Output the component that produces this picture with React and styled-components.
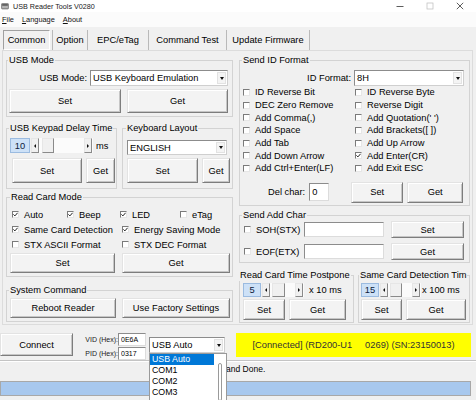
import React from 'react'
import styled, { createGlobalStyle, css } from 'styled-components'

const GlobalStyle = createGlobalStyle`
  html, body {
    margin: 0;
    padding: 0;
    background: #f0f0f0;
  }
  body {
    font-family: "Liberation Sans", Arial, sans-serif;
    font-size: 9.3px;
    color: #000;
  }
  * { box-sizing: border-box; }
`

const Window = styled.div`
  width: 476px;
  height: 400px;
  overflow: hidden;
  background: #f0f0f0;
`

const TitleBar = styled.div`
  height: 12px;
  background: #fff;
  display: flex;
  align-items: center;
  padding-left: 1px;
`

const TitleText = styled.span`
  font-size: 7.2px;
  margin-left: 4px;
  color: #1a1a1a;
`

const WinControls = styled.div`
  margin-left: auto;
  margin-right: 1px;
  display: flex;
  height: 100%;
`

const WinBtn = styled.span`
  width: 30px;
  display: flex;
  align-items: center;
  justify-content: center;
`

const MenuBar = styled.div`
  height: 15px;
  background: #fbfbfb;
  display: flex;
  align-items: center;
  gap: 8px;
  padding-left: 2px;
  font-size: 7.4px;
`

const MenuItem = styled.span`
  color: #111;
  u { text-decoration-thickness: 0.5px; text-underline-offset: 1px; }
`

const TabStrip = styled.div`
  height: 23px;
  padding: 3px 0 0 3px;
  display: flex;
`

const Tab = styled.div`
  width: ${p => p.$w}px;
  height: 20px;
  display: flex;
  align-items: center;
  justify-content: center;
  white-space: nowrap;
  ${p => p.$active
    ? css`
        border: 1px solid;
        border-color: #a0a0a0 #fff #fff #a0a0a0;
        margin-right: 2px;
      `
    : css`
        border-left: 1px solid #b9b9b9;
      `}
  ${p => p.$last && css`border-right: 1px solid #b9b9b9;`}
`

const TabPanel = styled.div`
  margin-left: 2px;
  width: 471px;
  height: 275px;
  border: 1px solid #dcdcdc;
  padding: 4px 0 0 3px;
  display: grid;
  grid-template-columns: 227px 231px;
  column-gap: 6px;
  align-items: start;
`

const Column = styled.div`
  display: flex;
  flex-direction: column;
`

const GroupRow = styled.div`
  display: flex;
  gap: ${p => p.$gap}px;
  margin-top: ${p => p.$mt || 0}px;
`

const Group = styled.fieldset`
  margin: ${p => p.$mt || 0}px 0 0 0;
  padding: 0;
  border: 1px solid #d3d3d3;
  height: ${p => p.$h}px;
  width: ${p => (p.$w ? `${p.$w}px` : 'auto')};
  min-width: 0;
  display: flex;
  flex-direction: column;
`

const Legend = styled.legend`
  padding: 0 1px;
  margin-left: ${p => p.$ml ?? 2}px;
  line-height: 11px;
  white-space: nowrap;
`

const Body = styled.div`
  padding: ${p => p.$pad};
  display: flex;
  flex-direction: column;
`

const Row = styled.div`
  display: flex;
  align-items: center;
  height: ${p => p.$h}px;
  gap: ${p => p.$gap || 0}px;
  margin-top: ${p => p.$mt || 0}px;
  padding-left: ${p => p.$pl || 0}px;
  justify-content: ${p => (p.$end ? 'flex-end' : 'flex-start')};
`

const FieldLabel = styled.span`
  margin-right: ${p => p.$mr ?? 3}px;
  margin-left: ${p => p.$ml || 0}px;
  white-space: nowrap;
`

const Btn = styled.button`
  width: ${p => p.$w}px;
  height: ${p => p.$h}px;
  margin: 0 0 0 ${p => p.$ml || 0}px;
  padding: 0;
  font: inherit;
  color: #000;
  background: #f3f3f3;
  border: 1px solid;
  border-color: #e3e3e3 #7d7d7d #7d7d7d #e3e3e3;
  box-shadow: inset 1px 1px 0 #fff, inset -1px -1px 0 #c6c6c6;
  flex-shrink: 0;
`

const SelectBox = styled.div`
  width: ${p => p.$w}px;
  height: ${p => p.$h}px;
  background: #fff;
  border: 1px solid;
  border-color: #8c8c8c #cfcfcf #cfcfcf #8c8c8c;
  display: flex;
  align-items: center;
  padding-left: 2px;
  white-space: nowrap;
  flex-shrink: 0;
`

const SelectArrow = styled.span`
  margin-left: auto;
  width: 9px;
  height: calc(100% - 2px);
  margin-right: 1px;
  background: #f4f4f4;
  border: 1px solid #e2e2e2;
  display: flex;
  align-items: center;
  justify-content: center;
  &::after {
    content: "";
    border-left: 2px solid transparent;
    border-right: 2px solid transparent;
    border-top: 3px solid #111;
  }
`

const TextField = styled.input`
  width: ${p => p.$w}px;
  height: ${p => p.$h}px;
  margin: 0 0 0 ${p => p.$ml || 0}px;
  padding: 0 0 0 2px;
  font: inherit;
  font-size: ${p => p.$fs || 9.3}px;
  background: #fff;
  border: 1px solid;
  border-color: #8c8c8c #dcdcdc #dcdcdc #8c8c8c;
  outline: none;
  flex-shrink: 0;
`

const Check = styled.div`
  display: flex;
  align-items: center;
  width: ${p => (p.$w ? `${p.$w}px` : 'auto')};
  white-space: nowrap;
  flex-shrink: 0;
`

const Box = styled.span`
  width: 7px;
  height: 7px;
  margin-right: 5px;
  background: #fff;
  border: 1px solid;
  border-color: #7a7a7a #e6e6e6 #e6e6e6 #7a7a7a;
  display: flex;
  align-items: center;
  justify-content: center;
  flex-shrink: 0;
`

const CheckGrid = styled.div`
  display: grid;
  grid-template-columns: 112px 1fr;
  grid-auto-rows: 12.7px;
  align-items: center;
`

const SpinValue = styled.span`
  width: ${p => p.$w}px;
  height: 100%;
  margin-right: ${p => p.$mr || 0}px;
  background: #cde1f7;
  border: 1px solid #9bbbe0;
  display: flex;
  align-items: center;
  justify-content: center;
  color: #0c1a3a;
  flex-shrink: 0;
`

const HScroll = styled.div`
  width: ${p => p.$w}px;
  height: 100%;
  background: #fbfbfb;
  display: flex;
  flex-shrink: 0;
`

const ScrollPart = styled.span`
  width: ${p => p.$w || 8}px;
  height: 100%;
  margin-left: ${p => p.$ml || 0}px;
  margin-right: ${p => p.$mr || 0}px;
  background: #f0f0f0;
  border: 1px solid;
  border-color: #e6e6e6 #8a8a8a #8a8a8a #e6e6e6;
  display: flex;
  align-items: center;
  justify-content: center;
  ${p => p.$dir === 'left' && css`
    &::after {
      content: "";
      border-top: 2px solid transparent;
      border-bottom: 2px solid transparent;
      border-right: 2px solid #111;
    }
  `}
  ${p => p.$dir === 'right' && css`
    &::after {
      content: "";
      border-top: 2px solid transparent;
      border-bottom: 2px solid transparent;
      border-left: 2px solid #111;
    }
  `}
`

const ScrollTrack = styled.span`
  flex: 1;
`

const Unit = styled.span`
  margin-left: ${p => p.$ml}px;
  white-space: nowrap;
`

const BottomBar = styled.div`
  height: 35px;
  padding-top: 8px;
  display: flex;
  align-items: flex-start;
`

const VidPid = styled.div`
  margin-left: 10px;
  display: flex;
  flex-direction: column;
  gap: 1px;
`

const SmallRow = styled.div`
  display: flex;
  align-items: center;
  height: 13px;
`

const SmallLabel = styled.span`
  width: 35px;
  text-align: right;
  font-size: 7px;
  color: #222;
`

const ComboWrap = styled.div`
  position: relative;
  margin: 4px 0 0 3px;
`

const DropList = styled.div`
  position: absolute;
  top: 16px;
  left: 0;
  width: 78px;
  height: 52px;
  background: #fff;
  border: 1px solid #9a9a9a;
  display: flex;
  z-index: 5;
  font-size: 8.8px;
`

const DropItems = styled.div`
  flex: 1;
  display: flex;
  flex-direction: column;
`

const DropItem = styled.div`
  height: 11px;
  line-height: 11px;
  padding-left: 2px;
  background: ${p => (p.$sel ? '#0078d7' : 'transparent')};
  color: ${p => (p.$sel ? '#fff' : '#000')};
`

const DropTrack = styled.div`
  width: 12px;
  padding-top: 9px;
  display: flex;
  justify-content: center;
`

const DropThumb = styled.span`
  width: 4px;
  height: 38px;
  border: 1px solid #9a9a9a;
  border-radius: 2px;
  background: #fff;
`

const Connected = styled.div`
  margin-left: 11px;
  width: 235px;
  height: 24px;
  background: #ffff00;
  display: flex;
  align-items: center;
  justify-content: center;
  white-space: pre;
  color: #333;
`

const Separator = styled.div`
  height: 2px;
  border-top: 1px solid #c4c4c4;
  border-bottom: 1px solid #fff;
`

const StatusText = styled.div`
  height: 15px;
  line-height: 15px;
  padding-left: 201px;
  font-size: 8.5px;
`

const Progress = styled.div`
  margin-top: 4px;
  width: 471px;
  height: 15px;
  border: 1px solid #a8a8a8;
  background: #a8c8ee;
`

function CheckMark() {
  return (
    <svg width="5" height="5" viewBox="0 0 5 5">
      <path d="M0.4 2.4 L1.9 3.9 L4.6 0.8" fill="none" stroke="#222" strokeWidth="1" />
    </svg>
  )
}

function CheckBox({ label, checked, w }) {
  return (
    <Check $w={w}>
      <Box>{checked && <CheckMark />}</Box>
      {label}
    </Check>
  )
}

function Select({ value, w, h }) {
  return (
    <SelectBox $w={w} $h={h}>
      {value}
      <SelectArrow />
    </SelectBox>
  )
}

function Spin({ value, valueW, scrollW, thumbGap, thumbW, unit, unitGap }) {
  return (
    <>
      <SpinValue $w={valueW} $mr={1}>{value}</SpinValue>
      <HScroll $w={scrollW}>
        <ScrollPart $dir="left" />
        <ScrollPart $w={thumbW} $ml={thumbGap} />
        <ScrollTrack />
        <ScrollPart $dir="right" $mr={1} />
      </HScroll>
      <Unit $ml={unitGap}>{unit}</Unit>
    </>
  )
}

function AppIcon() {
  return (
    <svg width="8" height="8" viewBox="0 0 8 8">
      <rect x="0.5" y="1.5" width="7" height="5.5" rx="0.8" fill="#9c9c9c" stroke="#666" strokeWidth="0.6" />
      <rect x="1.2" y="2.2" width="5.6" height="1.4" fill="#555" />
      <rect x="1.5" y="4.5" width="1.2" height="1" fill="#e8e8e8" />
      <rect x="3.4" y="4.5" width="1.2" height="1" fill="#e8e8e8" />
      <rect x="5.3" y="4.5" width="1.2" height="1" fill="#e8e8e8" />
    </svg>
  )
}

const idChecks = [
  ['ID Reverse Bit', false], ['ID Reverse Byte', false],
  ['DEC Zero Remove', false], ['Reverse Digit', false],
  ['Add Comma(,)', false], ["Add Quotation(' ')", false],
  ['Add Space', false], ['Add Brackets([ ])', false],
  ['Add Tab', false], ['Add Up Arrow', false],
  ['Add Down Arrow', false], ['Add Enter(CR)', true],
  ['Add Ctrl+Enter(LF)', false], ['Add Exit ESC', false],
]

export default function App() {
  return (
    <Window>
      <GlobalStyle />
      <TitleBar>
        <AppIcon />
        <TitleText>USB Reader Tools V0280</TitleText>
        <WinControls>
          <WinBtn>
            <svg width="8" height="8" viewBox="0 0 8 8"><path d="M0.5 4.5 H7.5" stroke="#333" strokeWidth="0.8" /></svg>
          </WinBtn>
          <WinBtn>
            <svg width="8" height="8" viewBox="0 0 8 8"><rect x="1" y="1" width="6" height="6" fill="none" stroke="#bbb" strokeWidth="0.7" /></svg>
          </WinBtn>
          <WinBtn>
            <svg width="8" height="8" viewBox="0 0 8 8"><path d="M0.8 0.8 L7.2 7.2 M7.2 0.8 L0.8 7.2" stroke="#333" strokeWidth="0.8" /></svg>
          </WinBtn>
        </WinControls>
      </TitleBar>

      <MenuBar>
        <MenuItem><u>F</u>ile</MenuItem>
        <MenuItem><u>L</u>anguage</MenuItem>
        <MenuItem><u>A</u>bout</MenuItem>
      </MenuBar>

      <TabStrip>
        <Tab $w={47} $active>Common</Tab>
        <Tab $w={35}>Option</Tab>
        <Tab $w={61}>EPC/eTag</Tab>
        <Tab $w={78}>Command Test</Tab>
        <Tab $w={84} $last>Update Firmware</Tab>
      </TabStrip>

      <TabPanel>
        <Column>
          <Group $h={62}>
            <Legend $ml={1}>USB Mode</Legend>
            <Body $pad="4px 4px 0 2px">
              <Row $h={16} $end>
                <FieldLabel>USB Mode:</FieldLabel>
                <Select value="USB Keyboard Emulation" w={138} h={16} />
              </Row>
              <Row $h={24} $gap={6} $mt={3}>
                <Btn $w={112} $h={24}>Set</Btn>
                <Btn $w={101} $h={24}>Get</Btn>
              </Row>
            </Body>
          </Group>

          <GroupRow $gap={5} $mt={6}>
            <Group $w={111} $h={66}>
              <Legend $ml={2}>USB Keypad Delay Time</Legend>
              <Body $pad="4px 0 0 3px">
                <Row $h={15}>
                  <Spin value="10" valueW={20} scrollW={62} thumbGap={3} thumbW={12} unit="ms" unitGap={3} />
                </Row>
                <Row $h={25} $gap={4} $mt={5} $pl={2}>
                  <Btn $w={70} $h={25}>Set</Btn>
                  <Btn $w={29} $h={25}>Get</Btn>
                </Row>
              </Body>
            </Group>
            <Group $w={111} $h={66}>
              <Legend $ml={3}>Keyboard Layout</Legend>
              <Body $pad="6px 0 0 4px">
                <Row $h={15}>
                  <Select value="ENGLISH" w={100} h={15} />
                </Row>
                <Row $h={25} $gap={4} $mt={3}>
                  <Btn $w={71} $h={25}>Set</Btn>
                  <Btn $w={28} $h={25}>Get</Btn>
                </Row>
              </Body>
            </Group>
          </GroupRow>

          <Group $h={85} $mt={3}>
            <Legend $ml={3}>Read Card Mode</Legend>
            <Body $pad="4px 0 0 3px">
              <Row $h={15} $pl={2}>
                <CheckBox label="Auto" checked w={55} />
                <CheckBox label="Beep" checked w={53} />
                <CheckBox label="LED" checked w={60} />
                <CheckBox label="eTag" />
              </Row>
              <Row $h={15} $pl={2}>
                <CheckBox label="Same Card Detection" checked w={110} />
                <CheckBox label="Energy Saving Mode" checked />
              </Row>
              <Row $h={15} $pl={2}>
                <CheckBox label="STX ASCII Format" w={110} />
                <CheckBox label="STX DEC Format" />
              </Row>
              <Row $h={20} $gap={7} $mt={1}>
                <Btn $w={105} $h={20}>Set</Btn>
                <Btn $w={108} $h={20}>Get</Btn>
              </Row>
            </Body>
          </Group>

          <Group $h={37} $mt={8}>
            <Legend $ml={2}>System Command</Legend>
            <Body $pad="2px 0 0 3px">
              <Row $h={20} $gap={6}>
                <Btn $w={106} $h={20}>Reboot Reader</Btn>
                <Btn $w={108} $h={20}>Use Factory Settings</Btn>
              </Row>
            </Body>
          </Group>
        </Column>

        <Column>
          <Group $h={151}>
            <Legend $ml={2}>Send ID Format</Legend>
            <Body $pad="4px 5px 0 3px">
              <Row $h={16} $end>
                <FieldLabel>ID Format:</FieldLabel>
                <Select value="8H" w={110} h={16} />
              </Row>
              <CheckGrid>
                {idChecks.map(([label, checked]) => (
                  <CheckBox key={label} label={label} checked={checked} />
                ))}
              </CheckGrid>
              <Row $h={21} $mt={7}>
                <FieldLabel $ml={25} $mr={4}>Del char:</FieldLabel>
                <TextField $w={20} $h={18} defaultValue="0" readOnly />
                <Btn $w={52} $h={21} $ml={22}>Set</Btn>
                <Btn $w={56} $h={21} $ml={4}>Get</Btn>
              </Row>
            </Body>
          </Group>

          <Group $h={53} $mt={4}>
            <Legend $ml={2}>Send Add Char</Legend>
            <Body $pad="0 5px 0 4px">
              <Row $h={17}>
                <CheckBox label="SOH(STX)" w={60} />
                <TextField $w={80} $h={15} readOnly />
                <Btn $w={73} $h={17} $ml={7}>Set</Btn>
              </Row>
              <Row $h={17} $mt={5}>
                <CheckBox label="EOF(ETX)" w={60} />
                <TextField $w={80} $h={15} readOnly />
                <Btn $w={73} $h={17} $ml={7}>Get</Btn>
              </Row>
            </Body>
          </Group>

          <GroupRow $gap={4} $mt={7}>
            <Group $w={115} $h={53}>
              <Legend $ml={-1}>Read Card Time Postpone</Legend>
              <Body $pad="2px 0 0 3px">
                <Row $h={14}>
                  <Spin value="5" valueW={18} scrollW={42} thumbGap={2} thumbW={13} unit="x 10 ms" unitGap={5} />
                </Row>
                <Row $h={21} $gap={4} $mt={2}>
                  <Btn $w={42} $h={21}>Set</Btn>
                  <Btn $w={57} $h={21}>Get</Btn>
                </Row>
              </Body>
            </Group>
            <Group $w={112} $h={53}>
              <Legend $ml={0}>Same Card Detection Tim</Legend>
              <Body $pad="2px 0 0 2px">
                <Row $h={14}>
                  <Spin value="15" valueW={18} scrollW={41} thumbGap={2} thumbW={12} unit="x 100 ms" unitGap={1} />
                </Row>
                <Row $h={21} $gap={4} $mt={2}>
                  <Btn $w={41} $h={21}>Set</Btn>
                  <Btn $w={60} $h={21}>Get</Btn>
                </Row>
              </Body>
            </Group>
          </GroupRow>
        </Column>
      </TabPanel>

      <BottomBar>
        <Btn $w={73} $h={23}>Connect</Btn>
        <VidPid>
          <SmallRow>
            <SmallLabel>VID (Hex):</SmallLabel>
            <TextField $w={28} $h={13} $fs={7} defaultValue="0E6A" readOnly />
          </SmallRow>
          <SmallRow>
            <SmallLabel>PID (Hex):</SmallLabel>
            <TextField $w={28} $h={13} $fs={7} defaultValue="0317" readOnly />
          </SmallRow>
        </VidPid>
        <ComboWrap>
          <Select value="USB Auto" w={76} h={16} />
          <DropList>
            <DropItems>
              <DropItem $sel>USB Auto</DropItem>
              <DropItem>COM1</DropItem>
              <DropItem>COM2</DropItem>
              <DropItem>COM3</DropItem>
            </DropItems>
            <DropTrack>
              <DropThumb />
            </DropTrack>
          </DropList>
        </ComboWrap>
        <Connected>{'[Connected] (RD200-U1     0269) (SN:23150013)'}</Connected>
      </BottomBar>

      <Separator />
      <StatusText>Command Done.</StatusText>
      <Progress />
    </Window>
  )
}
